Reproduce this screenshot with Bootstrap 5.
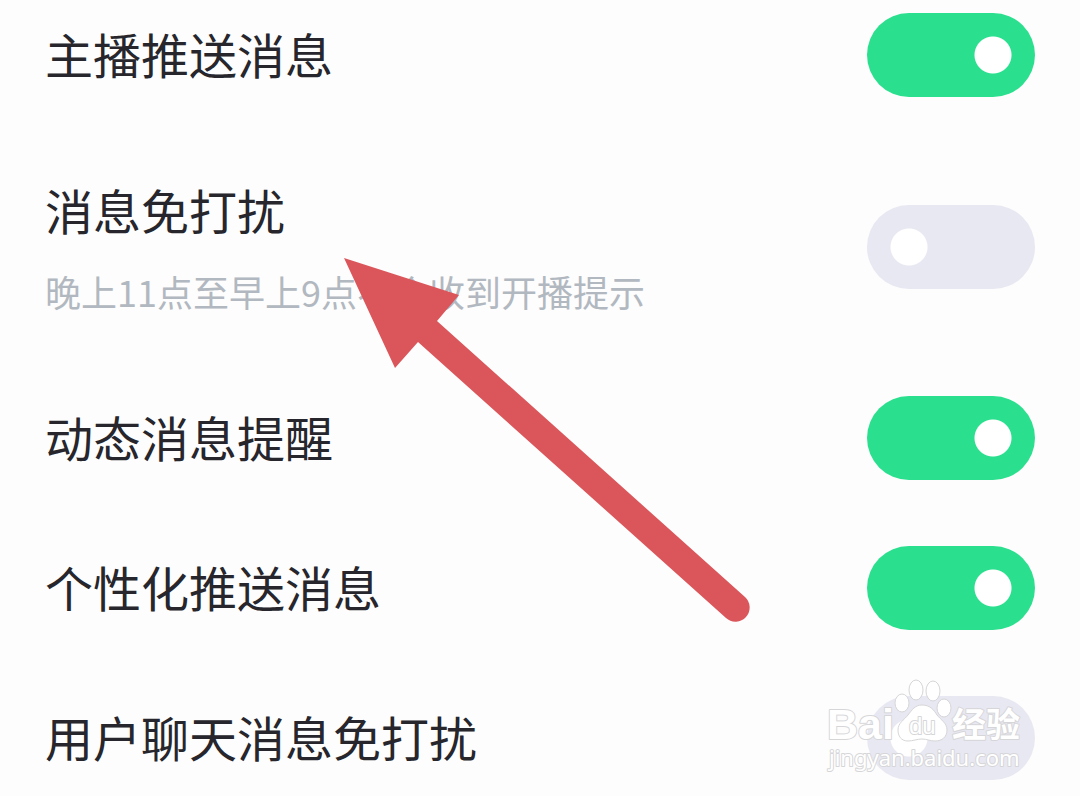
<!DOCTYPE html>
<html lang="zh-CN">
<head>
<meta charset="utf-8">
<meta name="viewport" content="width=device-width, initial-scale=1">
<title>消息设置</title>
<link href="https://cdn.jsdelivr.net/npm/bootstrap@5.3.0/dist/css/bootstrap.min.css" rel="stylesheet">
<style>
body { font-family: "Noto Sans CJK SC", sans-serif; background: #fdfdfd; }
.setting { padding: 33px 45px; background: transparent; color: #26262c; }
.setting:first-child { padding-top: 13px; }
.setting:last-child { padding-bottom: 15px; }
.setting-title { font-size: 48px; line-height: 80px; padding-bottom: 4px; }
.setting-note { font-size: 36px; line-height: 60px; margin-top: 8px; color: #b2b8c0; }
.setting-detail { padding: 6px 0 9px; }
.toggle.form-check-input { width: 168px; height: 84px; margin: 0; border: 0; border-radius: 42px; background-color: #e8e8f2;
  background-image: radial-gradient(circle, #fff 18px, transparent 19px); background-size: 84px 84px; background-position: left center; }
.toggle.form-check-input:checked { background-color: #2ae08e; background-position: right center;
  background-image: radial-gradient(circle, #fff 18px, transparent 19px); }
.pointer { top: 256px; left: 343px; pointer-events: none; }
.watermark { right: 50px; bottom: 16px; pointer-events: none; }
.watermark text { paint-order: stroke; }
</style>
</head>
<body>
<main class="position-relative overflow-hidden">
  <div class="list-group list-group-flush">
    <div class="setting list-group-item border-0 d-flex justify-content-between align-items-center">
      <label class="setting-title" for="host">主播推送消息</label>
      <input class="toggle form-check-input flex-shrink-0" type="checkbox" role="switch" id="host" checked>
    </div>
    <div class="setting list-group-item border-0 d-flex justify-content-between align-items-center">
      <div class="setting-detail">
        <label class="setting-title d-block" for="quiet">消息免打扰</label>
        <div class="setting-note">晚上11点至早上9点不会收到开播提示</div>
      </div>
      <input class="toggle form-check-input flex-shrink-0" type="checkbox" role="switch" id="quiet">
    </div>
    <div class="setting list-group-item border-0 d-flex justify-content-between align-items-center">
      <label class="setting-title" for="moments">动态消息提醒</label>
      <input class="toggle form-check-input flex-shrink-0" type="checkbox" role="switch" id="moments" checked>
    </div>
    <div class="setting list-group-item border-0 d-flex justify-content-between align-items-center">
      <label class="setting-title" for="personal">个性化推送消息</label>
      <input class="toggle form-check-input flex-shrink-0" type="checkbox" role="switch" id="personal" checked>
    </div>
    <div class="setting list-group-item border-0 d-flex justify-content-between align-items-center">
      <label class="setting-title" for="chat">用户聊天消息免打扰</label>
      <input class="toggle form-check-input flex-shrink-0" type="checkbox" role="switch" id="chat">
    </div>
  </div>

  <svg class="pointer position-absolute z-1" width="410" height="370" viewBox="343 256 410 370" aria-hidden="true">
    <path fill="#db565b" d="M344 258 459 295 437 321 745 597A14 14 0 0 1 726 618L418 342 395 368Z"/>
  </svg>

  <svg class="watermark position-absolute z-1" width="206" height="100" viewBox="824 680 206 100" role="img" aria-label="Baidu 经验">
    <g fill="#fff" stroke="#d6d6d8" stroke-width="2" stroke-linejoin="round">
      <text x="827" y="740" font-family="Liberation Sans" font-weight="700" font-size="43">Bai</text>
      <g stroke-width="1">
        <ellipse cx="902" cy="704" rx="7" ry="9"/>
        <ellipse cx="916" cy="691" rx="7" ry="10"/>
        <ellipse cx="933" cy="692" rx="7" ry="10"/>
        <ellipse cx="944" cy="709" rx="7" ry="9"/>
        <path d="M922 706C930 706 934 711 937 716 941 721 947 724 947 731 947 738 942 742 935 742 930 742 927 740 922 740 917 740 913 742 908 742 901 742 898 737 898 731 898 724 904 721 908 716 912 711 915 706 922 706Z"/>
      </g>
      <text x="909" y="735" font-family="Liberation Sans" font-size="24" fill="#fff">du</text>
      <text x="952" y="738" font-family="Noto Sans CJK SC" font-weight="700" font-size="34">经验</text>
      <text x="829" y="767" font-family="Noto Sans" font-size="22">jingyan.baidu.com</text>
    </g>
  </svg>
</main>
<script src="https://cdn.jsdelivr.net/npm/bootstrap@5.3.0/dist/js/bootstrap.bundle.min.js"></script>
</body>
</html>
